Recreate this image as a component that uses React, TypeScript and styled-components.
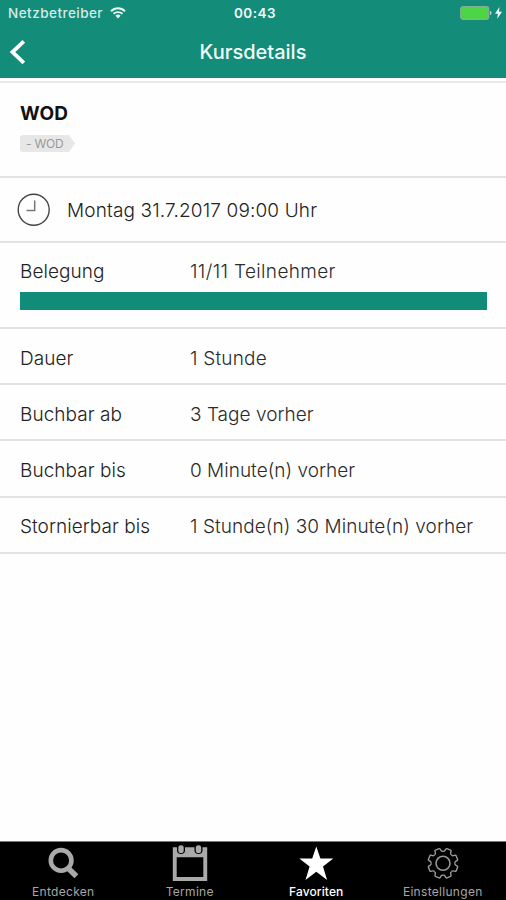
import React from "react";
import styled, { createGlobalStyle } from "styled-components";

const GlobalStyle = createGlobalStyle`
  * { box-sizing: border-box; }
  body { margin: 0; background: #fff; }
`;

const Screen = styled.div`
  display: flex;
  flex-direction: column;
  width: 506px;
  height: 900px;
  overflow: hidden;
  background: #fefefe;
  color: #222;
  font-family: Inter, "Liberation Sans", sans-serif;
  white-space: nowrap;
`;

const Header = styled.header`
  flex: none;
  height: 78px;
  background: #138c79;
  color: #f1faf8;
`;

const StatusBar = styled.div`
  display: grid;
  grid-template-columns: 1fr auto 1fr;
  align-items: center;
  height: 26px;
  padding: 0 4px 0 8px;
  font-size: 13.5px;
  line-height: 26px;
`;

const Carrier = styled.div`
  display: flex;
  align-items: center;
  gap: 7px;
  color: #d5ebe7;
  font-weight: 500;
  letter-spacing: 0.47px;
`;

const Clock = styled.div`
  font-weight: 600;
  letter-spacing: 0.5px;
`;

const Power = styled.div`
  display: flex;
  justify-content: flex-end;
  align-items: center;
  gap: 3px;
`;

const NavBar = styled.div`
  display: grid;
  grid-template-columns: 40px 1fr 40px;
  align-items: center;
  height: 52px;
`;

const BackButton = styled.button`
  display: flex;
  padding: 0 0 0 9px;
  border: 0;
  background: none;
`;

const Title = styled.h1`
  margin: 0;
  font-size: 20px;
  font-weight: 500;
  line-height: 52px;
  text-align: center;
  letter-spacing: 0;
`;

const Content = styled.main`
  flex: 1;
  margin-top: 3px;
  border-top: 2px solid #e9e9e9;
`;

const Section = styled.section<{ $height: number }>`
  height: ${(p) => p.$height}px;
  border-bottom: 2px solid #e3e3e3;
`;

const CourseSection = styled(Section)`
  padding: 18px 20px 0;
`;

const CourseName = styled.h2`
  margin: 0 0 9px;
  font-size: 19px;
  font-weight: 700;
  line-height: 25px;
  letter-spacing: 0.2px;
  color: #111;
`;

const Tag = styled.span`
  display: block;
  width: 55px;
  height: 17px;
  padding-left: 6px;
  border-radius: 3px 0 0 3px;
  background: #e7e7e7;
  clip-path: polygon(0 0, 89% 0, 100% 50%, 89% 100%, 0 100%);
  color: #999;
  font-size: 12px;
  line-height: 17px;
  letter-spacing: -0.2px;
`;

const DateSection = styled(Section)`
  display: flex;
  align-items: center;
  gap: 17px;
  padding-left: 17px;
`;

const DateText = styled.span`
  padding-top: 1px;
  font-size: 19px;
  font-weight: 300;
  letter-spacing: 0.14px;
`;

const Row = styled.div<{ $height: number }>`
  display: grid;
  grid-template-columns: 170px 1fr;
  align-items: center;
  height: ${(p) => p.$height}px;
  padding-left: 20px;
  font-size: 19px;
  font-weight: 300;
`;

const Label = styled.span`
  letter-spacing: 0.05px;
`;

const Value = styled.span<{ $spacing?: number }>`
  letter-spacing: ${(p) => p.$spacing ?? 0.02}px;
  color: #2b2b2b;
`;

const Occupancy = styled(Section)`
  display: flex;
  flex-direction: column;
  justify-content: flex-end;
  padding-bottom: 17px;
`;

const Meter = styled.div`
  height: 18px;
  margin: 0 19px 0 20px;
`;

const MeterFill = styled.div`
  height: 100%;
  background: #108c79;
`;

const TabBar = styled.nav`
  flex: none;
  display: grid;
  grid-template-columns: repeat(4, 126.5px);
  height: 59px;
  border-top: 1px solid #777;
  background: #000;
`;

const Tab = styled.div<{ $active?: boolean }>`
  display: flex;
  flex-direction: column;
  align-items: center;
  color: ${(p) => (p.$active ? "#fff" : "#a6a6a6")};
  font-size: 12px;
  font-weight: ${(p) => (p.$active ? 500 : 400)};
  line-height: 16px;
  letter-spacing: ${(p) => (p.$active ? "0.1px" : "0.3px")};

  svg { display: block; margin: 4px 0 2px; }
`;

const WifiIcon = () => (
  <svg width="16" height="12" viewBox="0 0 16 12" fill="none" stroke="#e9f6f3" strokeWidth="1.9">
    <path d="M1 4.2C5 .3 11 .3 15 4.2M3.5 6.8C6 4.5 10 4.5 12.5 6.8" />
    <path d="M5.4 8.7Q8 6.5 10.6 8.7L8 11.5Z" fill="#e9f6f3" stroke="none" />
  </svg>
);

const BatteryIcon = () => (
  <svg width="32" height="14" viewBox="0 0 32 14">
    <rect x=".7" y=".7" width="28" height="12.6" rx="2.5" fill="#4cd545" stroke="#83ae98" strokeWidth="1.3" />
    <path d="M30 5Q31.5 5 31.5 7T30 9Z" fill="#b9ddd2" />
  </svg>
);

const BoltIcon = () => (
  <svg width="7" height="12" viewBox="0 0 7 12">
    <path d="M4.4 0L0 6.7H3L2.1 12L7 4.8H4Z" fill="#f1faf8" />
  </svg>
);

const BackIcon = () => (
  <svg width="18" height="26" viewBox="0 0 18 26" fill="none" stroke="#fff" strokeWidth="3.8">
    <path d="M14.8 2.3L3.5 13L14.8 23.8" />
  </svg>
);

const ClockIcon = () => (
  <svg width="33" height="34" viewBox="0 0 33 34" fill="none">
    <circle cx="16.7" cy="16.8" r="15.5" stroke="#444" strokeWidth="1.4" />
    <path d="M17.7 7.5V17.5H9.5" stroke="#777" strokeWidth="1.5" />
  </svg>
);

const SearchIcon = () => (
  <svg width="32" height="36" viewBox="0 0 32 36" fill="none" stroke="#a9a9a9">
    <circle cx="14.1" cy="14.4" r="10.3" strokeWidth="4.6" />
    <path d="M21.2 22.2L29.4 30.2" strokeWidth="5.6" />
  </svg>
);

const CalendarIcon = () => (
  <svg width="36" height="36" viewBox="0 0 36 36" overflow="visible">
    <path fillRule="evenodd" d="M.8 1.2H35.2V35H.8ZM4.7 11.2V31H31.3V11.2Z" fill="#a9a9a9" />
    {[9, 26.5].map((x) => (
      <g key={x}>
        <path d={`M${x - 4} 0V4.2Q${x - 4} 8 ${x} 8Q${x + 4} 8 ${x + 4} 4.2V0Z`} fill="#000" />
        <rect x={x - 2.7} y="-.8" width="5.4" height="7.8" rx="2.6" fill="#a9a9a9" />
      </g>
    ))}
  </svg>
);

const StarIcon = () => (
  <svg width="36" height="36" viewBox="0 0 36 36">
    <path d="M18.3 .4L22.4 12.4H35.3L25 20.5L29.1 34L18.3 25.8L7.5 34L11.6 20.5L1.3 12.4H14.2Z" fill="#fff" />
  </svg>
);

// One tooth around the vertical axis; eight copies close the outline.
const GearIcon = () => (
  <svg width="36" height="36" viewBox="-18 -17.3 36 36" fill="none" stroke="#999" strokeWidth="1.4" strokeLinejoin="round">
    {Array.from({ length: 8 }, (_, i) => (
      <path
        key={i}
        d="M-4.6 -11.1Q-3.3 -11.2 -3.1 -12.4L-2.8 -14.3Q-2.7 -15 -2 -15H2Q2.7 -15 2.8 -14.3L3.1 -12.4Q3.3 -11.2 4.6 -11.1"
        transform={`rotate(${i * 45 + 22.5})`}
      />
    ))}
    <circle r="7" strokeWidth="1.6" />
  </svg>
);

const details = [
  { label: "Dauer", value: "1 Stunde", spacing: 0.2 },
  { label: "Buchbar ab", value: "3 Tage vorher" },
  { label: "Buchbar bis", value: "0 Minute(n) vorher" },
  { label: "Stornierbar bis", value: "1 Stunde(n) 30 Minute(n) vorher", spacing: 0.06 },
];

const tabs = [
  { label: "Entdecken", icon: <SearchIcon /> },
  { label: "Termine", icon: <CalendarIcon /> },
  { label: "Favoriten", icon: <StarIcon />, active: true },
  { label: "Einstellungen", icon: <GearIcon /> },
];

export default function App() {
  const booked = 11;
  const capacity = 11;
  return (
    <>
      <GlobalStyle />
      <Screen>
        <Header>
          <StatusBar>
            <Carrier>Netzbetreiber<WifiIcon /></Carrier>
            <Clock>00:43</Clock>
            <Power><BatteryIcon /><BoltIcon /></Power>
          </StatusBar>
          <NavBar>
            <BackButton aria-label="Zurück"><BackIcon /></BackButton>
            <Title>Kursdetails</Title>
          </NavBar>
        </Header>
        <Content>
          <CourseSection $height={95}>
            <CourseName>WOD</CourseName>
            <Tag>- WOD</Tag>
          </CourseSection>
          <DateSection $height={65}>
            <ClockIcon />
            <DateText>Montag 31.7.2017 09:00 Uhr</DateText>
          </DateSection>
          <Occupancy $height={86}>
            <Row $height={41}>
              <Label>Belegung</Label>
              <Value $spacing={0.35}>{booked}/{capacity} Teilnehmer</Value>
            </Row>
            <Meter><MeterFill style={{ width: `${(booked / capacity) * 100}%` }} /></Meter>
          </Occupancy>
          {details.map((d) => (
            <Section key={d.label} $height={56.2}>
              <Row $height={58}>
                <Label>{d.label}</Label>
                <Value $spacing={d.spacing}>{d.value}</Value>
              </Row>
            </Section>
          ))}
        </Content>
        <TabBar>
          {tabs.map((t) => (
            <Tab key={t.label} $active={t.active}>{t.icon}{t.label}</Tab>
          ))}
        </TabBar>
      </Screen>
    </>
  );
}
